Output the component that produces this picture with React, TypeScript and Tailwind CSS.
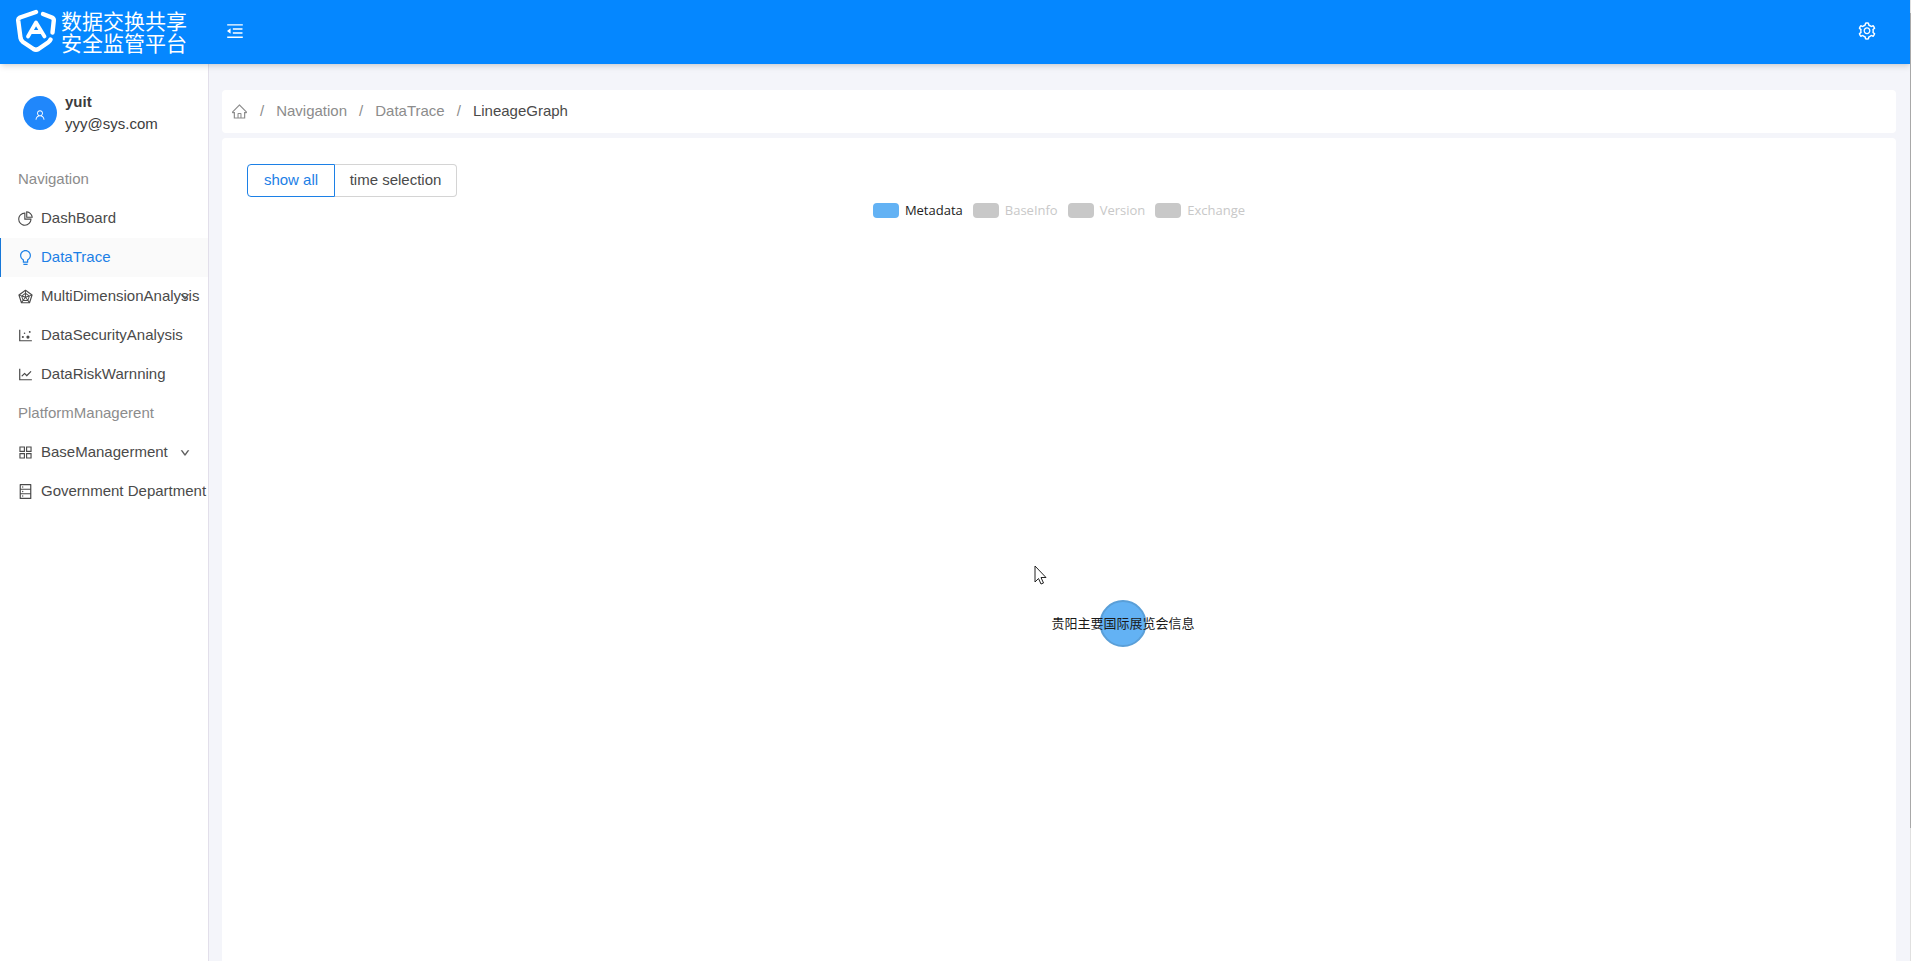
import type { ReactNode } from "react";
import {
  AiOutlineAppstore,
  AiOutlineBulb,
  AiOutlineDatabase,
  AiOutlineDotChart,
  AiOutlineDown,
  AiOutlineHome,
  AiOutlineLineChart,
  AiOutlineMenuFold,
  AiOutlinePieChart,
  AiOutlineRadarChart,
  AiOutlineSetting,
  AiOutlineUser,
} from "react-icons/ai";

type Entry = { label: string; icon: ReactNode; active?: boolean; expandable?: boolean };
type Group = { title: string; entries: Entry[] };

const groups: Group[] = [
  {
    title: "Navigation",
    entries: [
      { label: "DashBoard", icon: <AiOutlinePieChart /> },
      { label: "DataTrace", icon: <AiOutlineBulb />, active: true },
      { label: "MultiDimensionAnalysis", icon: <AiOutlineRadarChart />, expandable: true },
      { label: "DataSecurityAnalysis", icon: <AiOutlineDotChart /> },
      { label: "DataRiskWarnning", icon: <AiOutlineLineChart /> },
    ],
  },
  {
    title: "PlatformManagerent",
    entries: [
      { label: "BaseManagerment", icon: <AiOutlineAppstore />, expandable: true },
      { label: "Government Department", icon: <AiOutlineDatabase /> },
    ],
  },
];

const legend = [
  { label: "Metadata", on: true },
  { label: "BaseInfo", on: false },
  { label: "Version", on: false },
  { label: "Exchange", on: false },
];

function Logo() {
  return (
    <a href="#home" className="flex w-[208px] shrink-0 items-center gap-[3px] pl-4 text-white">
      <svg viewBox="0 0 42 44" className="h-11 w-[42px]" fill="none" stroke="currentColor" strokeWidth="4.4" strokeLinecap="round" strokeLinejoin="round" aria-hidden="true">
        <path d="M20 3L4 8.500Q2 9.500 2.200 11.500L4.500 29Q5 31.500 7 33L17.500 40Q20 41.500 22.500 40L32 33.500Q34 32 34.500 30.500" />
        <path d="M27 5L36 8.500Q38 9.500 37.800 11.500L36.500 23.500" />
        <path d="M12 27.500L20 13.500L28.500 27.500M15.500 23H25" strokeWidth="3.800" />
      </svg>
      <span className="flex flex-col font-['Noto_Sans_CJK_SC',sans-serif] text-[21px] leading-[22px]">
        <span>数据交换共享</span>
        <span>安全监管平台</span>
      </span>
    </a>
  );
}

function MenuRow({ entry }: { entry: Entry }) {
  return (
    <li>
      <a
        href={"#" + entry.label}
        aria-current={entry.active ? "page" : undefined}
        className={
          "relative flex h-[39px] items-center gap-[7px] border-l pl-4 whitespace-nowrap " +
          (entry.active ? "border-[#1677d8] bg-[#fafafa] text-[#1c80e6]" : "border-transparent text-[#4a4a4a]")
        }
      >
        <span className="shrink-0 text-[17px]">{entry.icon}</span>
        {entry.label}
        {entry.expandable && <AiOutlineDown className="absolute right-[18px] size-[10px] stroke-current stroke-[60px]" />}
      </a>
    </li>
  );
}

function Sidebar() {
  return (
    <aside className="w-[209px] shrink-0 border-r border-[#e2dfea] bg-white">
      <div className="flex items-center gap-2 pt-[27px] pl-[23px]">
        <span className="flex size-[34px] items-center justify-center rounded-full bg-[#2087fb] text-white">
          <AiOutlineUser className="mt-1 size-3" />
        </span>
        <div className="leading-[22px] text-[#3c3c3c]">
          <p className="font-bold">yuit</p>
          <p>yyy@sys.com</p>
        </div>
      </div>
      <nav className="pt-[25px]">
        {groups.map((group) => (
          <section key={group.title}>
            <h2 className="flex h-[39px] items-center pl-[18px] text-[#8c8c8c]">{group.title}</h2>
            <ul>
              {group.entries.map((entry) => (
                <MenuRow key={entry.label} entry={entry} />
              ))}
            </ul>
          </section>
        ))}
      </nav>
    </aside>
  );
}

function Breadcrumb() {
  return (
    <nav aria-label="Breadcrumb" className="rounded-sm bg-white px-[9px] text-[#8c8c8c]">
      <ol className="flex h-[43px] items-center gap-3">
        <li>
          <a href="#home" aria-label="Home"><AiOutlineHome className="size-[17px]" /></a>
        </li>
        <li aria-hidden="true">/</li>
        <li><a href="#Navigation">Navigation</a></li>
        <li aria-hidden="true">/</li>
        <li><a href="#DataTrace">DataTrace</a></li>
        <li aria-hidden="true">/</li>
        <li className="text-[#4a4a4a]" aria-current="page">LineageGraph</li>
      </ol>
    </nav>
  );
}

function Graph() {
  return (
    <div className="relative flex-1">
      <div className="flex justify-center gap-[10px] pt-1 font-['Open_Sans',sans-serif] text-[13px] leading-[18px]">
        {legend.map((item) => (
          <button key={item.label} type="button" className={"flex items-center gap-[6px] " + (item.on ? "text-[#222222]" : "text-[#c8c8c8]")}>
            <span className={"h-[15px] w-[26px] rounded " + (item.on ? "bg-[#63b2f4]" : "bg-[#c8c8c8]")} />
            {item.label}
          </button>
        ))}
      </div>
      <div className="absolute top-[403px] left-[calc(50%+64px)] flex size-[47px] -translate-x-1/2 items-center justify-center rounded-full border-2 border-[#5a9fd8] bg-[#63b2f4] pb-0.5">
        <span className="font-['Noto_Sans_CJK_SC',sans-serif] text-[13px] whitespace-nowrap text-[#1a1a1a]">贵阳主要国际展览会信息</span>
      </div>
      <svg viewBox="0 0 13 20" className="absolute top-[368px] left-[calc(50%-25px)] h-5 w-[13px]" fill="white" stroke="#222222" aria-hidden="true">
        <path d="M1 1V17L4.500 13.500L7 19L9.500 18L7 12.500H12Z" />
      </svg>
    </div>
  );
}

export default function App() {
  return (
    <div className="relative flex min-h-screen flex-col bg-[#f4f5fa] font-['Liberation_Sans',Arial,sans-serif] text-[15px]">
      <header className="z-10 flex h-16 items-center bg-[#0587ff] pb-0.5 text-white shadow-md">
        <Logo />
        <button type="button" aria-label="Collapse menu" className="ml-[17px]"><AiOutlineMenuFold className="size-5" /></button>
        <button type="button" aria-label="Settings" className="mr-[34px] ml-auto"><AiOutlineSetting className="size-5" /></button>
      </header>
      <div className="flex flex-1">
        <Sidebar />
        <main className="flex min-w-0 flex-1 flex-col gap-[5px] pt-[26px] pr-[15px] pl-[13px]">
          <Breadcrumb />
          <section className="flex flex-1 flex-col rounded-t-sm bg-white px-[25px] pt-[26px]">
            <div className="flex h-[33px] text-[#4a4a4a]">
              <button type="button" className="w-[88px] rounded-l border border-[#1c80e6] text-[#1c80e6]">show all</button>
              <button type="button" className="w-[122px] rounded-r border border-l-0 border-[#d4d4d4]">time selection</button>
            </div>
            <Graph />
          </section>
        </main>
      </div>
      <div className="absolute inset-y-0 right-0 z-20 w-px bg-[#e0e0e0] pt-[13px]" aria-hidden="true">
        <div className="h-[86%] bg-[#a8a8a8]" />
      </div>
    </div>
  );
}
